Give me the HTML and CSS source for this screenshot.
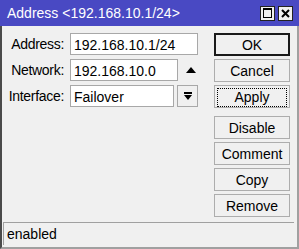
FILE: index.html
```html
<!DOCTYPE html>
<html lang="en">
<head>
    <meta charset="UTF-8">
    <title>Address &lt;192.168.10.1/24&gt;</title>
    <link rel="stylesheet" href="styles.css">
</head>
<body>
    <div class="window">
        <div class="titlebar">
            <span class="title">Address &lt;192.168.10.1/24&gt;</span>
            <div class="title-btns">
                <span class="tbtn"><span class="sq"></span></span>
                <span class="tbtn">
                    <svg width="9" height="9" viewBox="0 0 9 9"><path d="M1 1L8 8M8 1L1 8" stroke="#000" stroke-width="2"/></svg>
                </span>
            </div>
        </div>

        <div class="content">
            <div class="fields">
                <div class="row">
                    <label>Address:</label>
                    <div class="input wide">192.168.10.1/24</div>
                </div>
                <div class="row">
                    <label>Network:</label>
                    <div class="input mid">192.168.10.0</div>
                    <span class="up">
                        <svg width="10" height="6" viewBox="0 0 10 6"><path d="M0 6L5 0L10 6Z" fill="#000"/></svg>
                    </span>
                </div>
                <div class="row">
                    <label>Interface:</label>
                    <div class="input short">Failover</div>
                    <span class="drop">
                        <svg width="8" height="9" viewBox="0 0 8 9"><path d="M0 0H8V2H0Z M0 3H8L4 8Z" fill="#000"/></svg>
                    </span>
                </div>
            </div>

            <div class="buttons">
                <button class="default">OK</button>
                <button>Cancel</button>
                <button class="focus"><span>Apply</span></button>
                <div class="spacer"></div>
                <button>Disable</button>
                <button>Comment</button>
                <button>Copy</button>
                <button>Remove</button>
            </div>
        </div>

        <div class="status">enabled</div>
    </div>
</body>
</html>
```

FILE: styles.css
```css
body {
    margin: 0;
    font-family: "Liberation Sans", Arial, sans-serif;
    font-size: 14px;
    color: #000;
    background: #f0f0f0;
}
.window {
    width: 299px;
    height: 249px;
    box-sizing: border-box;
    border-left: 2px solid #4a4a4a;
    border-right: 2px solid #a0a0a0;
    border-bottom: 2px solid #a0a0a0;
    background: #f0f0f0;
    display: flex;
    flex-direction: column;
}
.titlebar {
    height: 26px;
    margin-left: -2px;
    margin-right: -2px;
    background: #4949c3;
    color: #fff;
    display: flex;
    align-items: center;
    justify-content: space-between;
    padding: 0 6px 0 7px;
    font-size: 14px;
}
.title-btns {
    display: flex;
    gap: 3px;
}
.tbtn {
    width: 13px;
    height: 13px;
    background: #f0f0f0;
    border: 1px solid #222;
    display: flex;
    align-items: center;
    justify-content: center;
}
.sq {
    width: 7px;
    height: 7px;
    border: 1px solid #000;
    border-top-width: 2px;
}
.content {
    flex: 1;
    display: flex;
    padding: 7px 7px 0 0;
}
.fields {
    flex: 1;
    display: flex;
    flex-direction: column;
    gap: 4px;
}
.row {
    height: 22px;
    display: flex;
    align-items: center;
}
label {
    width: 62px;
    text-align: right;
    margin-right: 6px;
    letter-spacing: -0.3px;
}
.input {
    height: 22px;
    box-sizing: border-box;
    background: #fff;
    border: 1px solid #a8a8a8;
    padding: 3px 0 0 3px;
}
.wide {
    width: 128px;
}
.mid {
    width: 108px;
}
.short {
    width: 104px;
}
.up {
    margin-left: 8px;
    display: flex;
}
.drop {
    margin-left: 3px;
    width: 19px;
    height: 20px;
    border: 1px solid #a8a8a8;
    display: flex;
    align-items: center;
    justify-content: center;
}
.buttons {
    width: 76px;
    display: flex;
    flex-direction: column;
    gap: 3px;
}
.spacer {
    height: 2px;
}
button {
    height: 23px;
    font-family: inherit;
    font-size: 14px;
    background: #f0f0f0;
    border: 1px solid #adadad;
    padding: 0;
    color: #000;
}
button.default {
    border: 2px solid #1a1a1a;
}
button.focus {
    padding: 2px;
}
button.focus span {
    display: block;
    height: 17px;
    line-height: 17px;
    border: 1px dotted #000;
}
.status {
    height: 23px;
    margin: 0 3px 2px 1px;
    border-top: 1px solid #a0a0a0;
    border-left: 1px solid #a0a0a0;
    padding: 3px 0 0 3px;
    box-sizing: border-box;
}
```
